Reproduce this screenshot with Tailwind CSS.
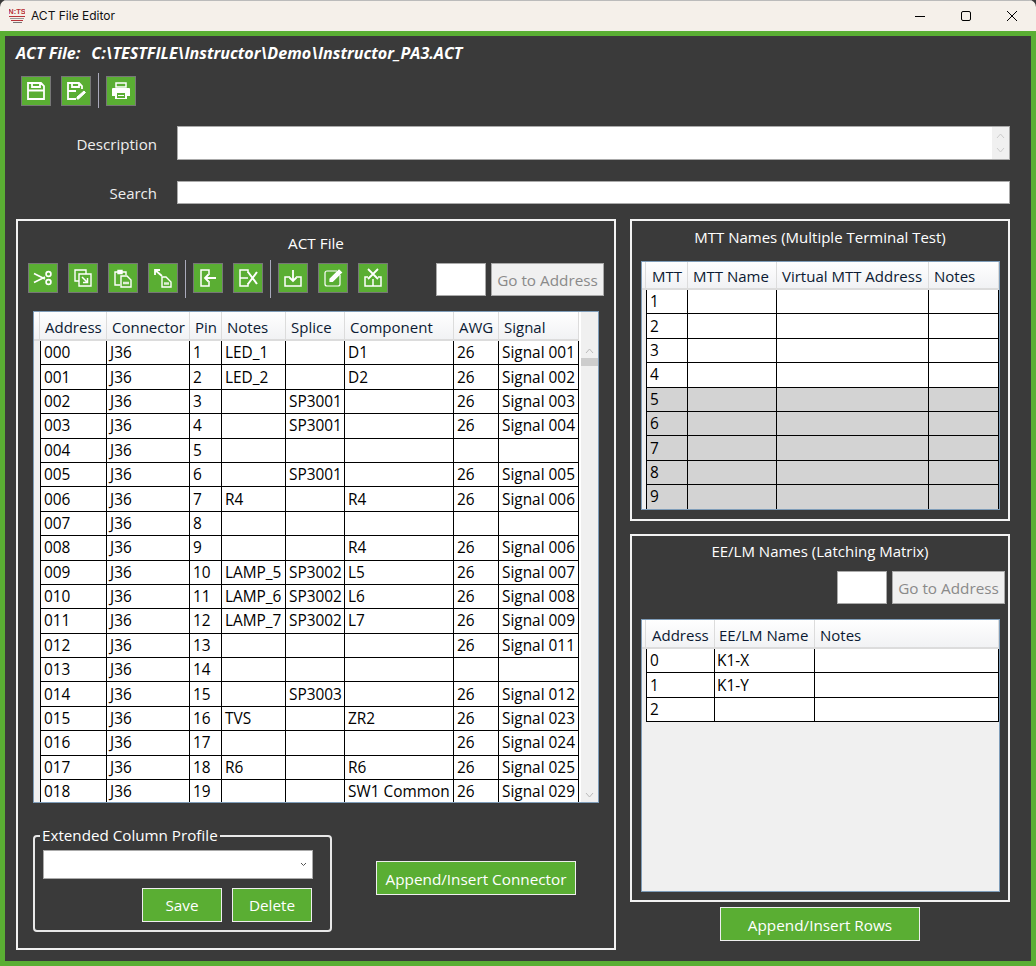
<!DOCTYPE html>
<html><head><meta charset="utf-8"><script src="https://cdn.jsdelivr.net/npm/@tailwindcss/browser@4"></script><title>ACT File Editor</title></head>
<body class="bg-[#3a3a3a] overflow-hidden">
<div class="w-[1036px] h-[966px] flex flex-col font-['Open_Sans',sans-serif] text-[15.3px] overflow-hidden rounded-t-[7px]">
 <div class="h-[31px] shrink-0 bg-[#f5f0ea] flex items-center border-t border-[#bbb] relative">
  <div class="w-[16px] h-[17px] ml-[9px] flex flex-col items-center overflow-hidden">
   <span class="text-[7.5px] leading-[8px] font-bold text-[#b8333a] font-['Liberation_Sans',sans-serif] border-b border-[#b8333a]">N:TS</span>
   <div class="w-[14px] h-[1px] bg-[#999] mt-[1px]"></div><div class="w-[12px] h-[1px] bg-[#b8333a] mt-[1px]"></div><div class="w-[9px] h-[1px] bg-[#777] mt-[1px]"></div>
  </div>
  <span class="ml-[6px] text-[12px] text-[#111] font-['Inter',sans-serif]">ACT File Editor</span>
  <div class="ml-auto flex items-center mr-[1px]">
   <svg class="w-[46px] h-[12px]" viewBox="0 0 46 12"><path d="M18 6.500h10" stroke="#000" fill="none"/></svg>
   <svg class="w-[46px] h-[12px]" viewBox="0 0 46 12"><rect x="18.500" y="1.500" width="9" height="9" rx="1.500" stroke="#000" fill="none"/></svg>
   <svg class="w-[46px] h-[12px]" viewBox="0 0 46 12"><path d="M18 1l10 10M28 1L18 11" stroke="#000" fill="none"/></svg>
  </div>
 </div>
 <div class="flex-1 border-[5px] border-[#5aae33] bg-[#3a3a3a] text-white flex flex-col pl-[11px] min-h-0">
  <div class="h-[34px] flex items-center font-bold italic text-[16.1px] shrink-0"><span>ACT File:</span><span class="ml-[11px]">C:\TESTFILE\Instructor\Demo\Instructor_PA3.ACT</span></div>
  <div class="h-[35px] mt-[3px] flex items-center pl-[5px] shrink-0">
   <div class="w-[30px] h-[30px] bg-[#5aae33] border border-[#777] flex items-center justify-center"><svg width="20" height="20" viewBox="0 0 20 20" fill="none" stroke="#fff" stroke-width="1.800"><path d="M2 2h13l3 3v13H2zM6 2v4h8V2M2 9.500h16"/></svg></div>
   <div class="w-[30px] h-[30px] ml-[10px] bg-[#5aae33] border border-[#777] flex items-center justify-center"><svg width="20" height="20" viewBox="0 0 20 20" fill="none" stroke="#fff" stroke-width="1.800"><path d="M10 18H2V2h11l3 3v3M6 2v4h7V2M2 10h8"/><path d="M11 18v-2l7-6 1.500 1.500-7 6.500z" fill="#fff" stroke-width="1"/></svg></div>
   <div class="w-[1px] h-[35px] bg-[#aab] ml-[7px] mr-[7px]"></div>
   <div class="w-[30px] h-[30px] bg-[#5aae33] border border-[#777] flex items-center justify-center"><svg width="20" height="20" viewBox="0 0 20 20"><path d="M5 2h10v4H5z" fill="none" stroke="#fff" stroke-width="1.500"/><path d="M2 7h16a1 1 0 0 1 1 1v7h-3v3H4v-3H1V8a1 1 0 0 1 1-1z" fill="#fff"/><path d="M6 12h8v5H6z" fill="#5aae33"/><path d="M7 14.500h6" stroke="#fff"/></svg></div>
  </div>
  <div class="h-[34px] mt-[18px] flex shrink-0">
   <div class="w-[141px] text-right text-[15.1px] leading-[36px] text-[#eee]">Description</div>
   <div class="ml-[20px] w-[833px] bg-white border border-[#aaa] flex justify-end">
    <div class="w-[17px] bg-[#f0f0f0] flex flex-col items-center justify-between py-[6px]">
     <svg width="9" height="6" viewBox="0 0 9 6"><path d="M1 5l3.500-4L8 5" stroke="#ccc" fill="none"/></svg>
     <svg width="9" height="6" viewBox="0 0 9 6"><path d="M1 1l3.500 4L8 1" stroke="#ccc" fill="none"/></svg>
    </div>
   </div>
  </div>
  <div class="h-[23px] mt-[21px] flex shrink-0">
   <div class="w-[141px] text-right text-[15px] leading-[25px] text-[#eee]">Search</div>
   <div class="ml-[20px] w-[833px] bg-white border border-[#aaa]"></div>
  </div>
  <div class="mt-[15px] flex items-start shrink-0">
   <!-- left panel -->
   <div class="w-[600px] h-[731px] border-2 border-[#f2f2f2] flex flex-col">
    <div class="h-[42px] pt-[11px] text-center leading-[22px] shrink-0">ACT File</div>
    <div class="h-[33px] flex items-start pl-[10px] shrink-0 relative">
     <div class="w-[30px] h-[30px] bg-[#5aae33] border border-[#777] flex items-center justify-center"><svg width="20" height="20" viewBox="0 0 20 20" fill="none" stroke="#fff" stroke-width="1.700"><path d="M1 5.500L12 11M1 14.500L12 9"/><circle cx="15.500" cy="6" r="2.400"/><circle cx="15.500" cy="14" r="2.400"/></svg></div>
     <div class="w-[30px] h-[30px] ml-[10px] bg-[#5aae33] border border-[#777] flex items-center justify-center"><svg width="20" height="20" viewBox="0 0 20 20" fill="none" stroke="#fff" stroke-width="1.400"><path d="M6 13H2V2h11v4"/><path d="M6 6h12v12H6z"/><path d="M9 9l5 5M14.500 10v4.500H10" stroke-width="1.500"/></svg></div>
     <div class="w-[30px] h-[30px] ml-[10px] bg-[#5aae33] border border-[#777] flex items-center justify-center"><svg width="20" height="20" viewBox="0 0 20 20" fill="none" stroke="#fff" stroke-width="1.400"><path d="M7 17H2V4h3M9 4h4v3"/><path d="M5 2.500h4v3H5z" fill="#fff"/><path d="M8 8h6l4 4v7H8z"/><path d="M10 15h6" stroke-width="2.500" stroke="#dfefd6"/></svg></div>
     <div class="w-[30px] h-[30px] ml-[10px] bg-[#5aae33] border border-[#777] flex items-center justify-center"><svg width="20" height="20" viewBox="0 0 20 20" fill="none" stroke="#fff" stroke-width="1.400"><path d="M2 2l7 6M2 7V2h5" stroke-width="1.800"/><path d="M9 9h4l5 5v5H9z"/><path d="M11 15.500h5" stroke-width="2.500" stroke="#dfefd6"/></svg></div>
     <div class="w-[1px] h-[38px] bg-[#aab] ml-[7px] mr-[7px] mt-[-3px]"></div>
     <div class="w-[30px] h-[30px] bg-[#5aae33] border border-[#777] flex items-center justify-center"><svg width="20" height="20" viewBox="0 0 20 20" fill="none" stroke="#fff" stroke-width="1.500"><path d="M11 7V2H3v16h8v-5"/><path d="M18 10H7M10.500 6.500L7 10l3.500 3.500" stroke-width="1.800"/></svg></div>
     <div class="w-[30px] h-[30px] ml-[10px] bg-[#5aae33] border border-[#777] flex items-center justify-center"><svg width="20" height="20" viewBox="0 0 20 20" fill="none" stroke="#fff" stroke-width="1.500"><path d="M10 5V2H2v16h8v-3M2 10h8"/><path d="M10 4l9 12M19 4l-9 12" stroke-width="2"/></svg></div>
     <div class="w-[1px] h-[38px] bg-[#aab] ml-[7px] mr-[7px] mt-[-3px]"></div>
     <div class="w-[30px] h-[30px] bg-[#5aae33] border border-[#777] flex items-center justify-center"><svg width="20" height="20" viewBox="0 0 20 20" fill="none" stroke="#fff" stroke-width="1.500"><path d="M7 9H2v9h16V9h-5"/><path d="M10 2v11M6.500 9.500L10 13l3.500-3.500" stroke-width="1.800"/></svg></div>
     <div class="w-[30px] h-[30px] ml-[10px] bg-[#5aae33] border border-[#777] flex items-center justify-center"><svg width="20" height="20" viewBox="0 0 20 20" fill="none" stroke="#fff" stroke-width="1.200"><path d="M14 3H4a2 2 0 0 0-2 2v11a2 2 0 0 0 2 2h11a2 2 0 0 0 2-2V7"/><path d="M7 13.500v-2.500l9-9 2.500 2.500-9 9z" fill="#fff"/></svg></div>
     <div class="w-[30px] h-[30px] ml-[10px] bg-[#5aae33] border border-[#777] flex items-center justify-center"><svg width="20" height="20" viewBox="0 0 20 20" fill="none" stroke="#fff" stroke-width="1.500"><path d="M5 9H2v9h16V9h-3M10 11v7"/><path d="M5 1l10 10M15 1L5 11" stroke-width="1.800"/></svg></div>
     <div class="ml-[48px] w-[50px] h-[33px] bg-white border border-[#aaa]"></div>
     <div class="ml-[5px] w-[113px] h-[33px] bg-[#f0f0f0] border border-[#aaa] text-[#8a8a8a] text-center leading-[32px]">Go to Address</div>
    </div>
    <!-- main grid -->
    <div class="mt-[15px] ml-[15px] w-[566px] h-[492px] bg-white border border-[#7f9db9] flex shrink-0 overflow-hidden">
     <table class="table-fixed border-separate border-spacing-0 w-[545px] h-min text-[15.4px] text-black [&_td]:border-r [&_td]:border-b [&_td]:border-black [&_td]:px-[3px] [&_td]:pt-[1px] [&_td]:h-[24.4px] [&_td]:leading-[20px] [&_td]:whitespace-nowrap [&_td]:overflow-hidden [&_td:first-child]:border-0 [&_td:first-child]:px-0 [&_td:first-child]:bg-[#f0f0f0] [&_td:nth-child(2)]:border-l [&_th]:h-[29px] [&_th]:pt-[3px] [&_th]:font-normal [&_th]:text-[15px] [&_th]:text-left [&_th]:pl-[5px] [&_th]:pr-0 [&_th]:text-[#0b1a33] [&_th]:whitespace-nowrap [&_th]:bg-gradient-to-b [&_th]:from-white [&_th]:to-[#f1f2f4] [&_th]:border-r [&_th]:border-b-2 [&_th]:border-[#dcdcdc]">
      <colgroup><col class="w-[6px]"><col class="w-[67px]"><col class="w-[83px]"><col class="w-[32px]"><col class="w-[64px]"><col class="w-[59px]"><col class="w-[109px]"><col class="w-[45px]"><col class="w-[80px]"></colgroup>
      <thead><tr><th></th><th>Address</th><th>Connector</th><th>Pin</th><th>Notes</th><th>Splice</th><th>Component</th><th>AWG</th><th>Signal</th></tr></thead>
      <tbody>
       <tr><td></td><td>000</td><td>J36</td><td>1</td><td>LED_1</td><td></td><td>D1</td><td>26</td><td>Signal 001</td></tr>
       <tr><td></td><td>001</td><td>J36</td><td>2</td><td>LED_2</td><td></td><td>D2</td><td>26</td><td>Signal 002</td></tr>
       <tr><td></td><td>002</td><td>J36</td><td>3</td><td></td><td>SP3001</td><td></td><td>26</td><td>Signal 003</td></tr>
       <tr><td></td><td>003</td><td>J36</td><td>4</td><td></td><td>SP3001</td><td></td><td>26</td><td>Signal 004</td></tr>
       <tr><td></td><td>004</td><td>J36</td><td>5</td><td></td><td></td><td></td><td></td><td></td></tr>
       <tr><td></td><td>005</td><td>J36</td><td>6</td><td></td><td>SP3001</td><td></td><td>26</td><td>Signal 005</td></tr>
       <tr><td></td><td>006</td><td>J36</td><td>7</td><td>R4</td><td></td><td>R4</td><td>26</td><td>Signal 006</td></tr>
       <tr><td></td><td>007</td><td>J36</td><td>8</td><td></td><td></td><td></td><td></td><td></td></tr>
       <tr><td></td><td>008</td><td>J36</td><td>9</td><td></td><td></td><td>R4</td><td>26</td><td>Signal 006</td></tr>
       <tr><td></td><td>009</td><td>J36</td><td>10</td><td>LAMP_5</td><td>SP3002</td><td>L5</td><td>26</td><td>Signal 007</td></tr>
       <tr><td></td><td>010</td><td>J36</td><td>11</td><td>LAMP_6</td><td>SP3002</td><td>L6</td><td>26</td><td>Signal 008</td></tr>
       <tr><td></td><td>011</td><td>J36</td><td>12</td><td>LAMP_7</td><td>SP3002</td><td>L7</td><td>26</td><td>Signal 009</td></tr>
       <tr><td></td><td>012</td><td>J36</td><td>13</td><td></td><td></td><td></td><td>26</td><td>Signal 011</td></tr>
       <tr><td></td><td>013</td><td>J36</td><td>14</td><td></td><td></td><td></td><td></td><td></td></tr>
       <tr><td></td><td>014</td><td>J36</td><td>15</td><td></td><td>SP3003</td><td></td><td>26</td><td>Signal 012</td></tr>
       <tr><td></td><td>015</td><td>J36</td><td>16</td><td>TVS</td><td></td><td>ZR2</td><td>26</td><td>Signal 023</td></tr>
       <tr><td></td><td>016</td><td>J36</td><td>17</td><td></td><td></td><td></td><td>26</td><td>Signal 024</td></tr>
       <tr><td></td><td>017</td><td>J36</td><td>18</td><td>R6</td><td></td><td>R6</td><td>26</td><td>Signal 025</td></tr>
       <tr><td></td><td>018</td><td>J36</td><td>19</td><td></td><td></td><td>SW1 Common</td><td>26</td><td>Signal 029</td></tr>
      </tbody>
     </table>
     <div class="ml-auto w-[17px] bg-[#f0f0f0] flex flex-col items-center pt-[36px] pb-[4px]">
      <svg width="9" height="6" viewBox="0 0 9 6"><path d="M1 5l3.500-4L8 5" stroke="#bbb" fill="none"/></svg>
      <div class="w-full h-[8px] bg-[#cdcdcd] mt-[4px]"></div>
      <svg class="mt-auto" width="9" height="6" viewBox="0 0 9 6"><path d="M1 1l3.500 4L8 1" stroke="#bbb" fill="none"/></svg>
     </div>
    </div>
    <!-- bottom -->
    <div class="flex items-start shrink-0 mt-[32px] ml-[15px]">
     <div class="relative w-[299px] h-[97px] border-2 border-[#e8e8e8] rounded-[4px] pl-[8px] pt-[13px]">
      <span class="absolute left-[5px] top-[-12px] bg-[#3a3a3a] px-[2px] text-[15.2px] leading-[20px] whitespace-nowrap">Extended Column Profile</span>
      <div class="w-[270px] h-[29px] bg-white border border-[#aaa] flex items-center justify-end pr-[5px]"><svg width="7" height="5" viewBox="0 0 7 5"><path d="M1 1l2.500 2.500L6 1" stroke="#555" fill="none"/></svg></div>
      <div class="flex mt-[9px] pl-[99px] gap-[10px]">
       <div class="w-[80px] h-[34px] bg-[#5aae33] border border-[#eee] text-center leading-[32px]">Save</div>
       <div class="w-[80px] h-[34px] bg-[#5aae33] border border-[#eee] text-center leading-[32px]">Delete</div>
      </div>
     </div>
     <div class="ml-[44px] mt-[26px] w-[200px] h-[34px] bg-[#5aae33] border border-[#eee] text-center leading-[34px]">Append/Insert Connector</div>
    </div>
   </div>
   <!-- right col -->
   <div class="ml-[14px] w-[380px] flex flex-col">
    <div class="h-[302px] border-2 border-[#f2f2f2] flex flex-col">
     <div class="h-[40px] pt-[5px] text-center text-[15px] leading-[22px] shrink-0">MTT Names (Multiple Terminal Test)</div>
     <div class="ml-[9px] w-[359px] h-[249px] bg-white border border-[#7f9db9] overflow-hidden shrink-0">
      <table class="table-fixed border-separate border-spacing-0 w-[357px] text-[15.4px] text-black [&_td]:border-r [&_td]:border-b [&_td]:border-black [&_td]:px-[3px] [&_td]:pt-[1px] [&_td]:h-[24.4px] [&_td]:leading-[20px] [&_td:first-child]:border-0 [&_td:first-child]:px-0 [&_td:first-child]:bg-[#f0f0f0] [&_td:nth-child(2)]:border-l [&_th]:h-[28px] [&_th]:pt-[3px] [&_th]:font-normal [&_th]:text-[15px] [&_th]:text-left [&_th]:pl-[5px] [&_th:nth-child(2)]:pl-[6px] [&_th]:pr-0 [&_th]:text-[#0b1a33] [&_th]:whitespace-nowrap [&_th]:bg-gradient-to-b [&_th]:from-white [&_th]:to-[#f1f2f4] [&_th]:border-r [&_th]:border-b-2 [&_th]:border-[#dcdcdc]">
       <colgroup><col class="w-[4px]"><col class="w-[42px]"><col class="w-[89px]"><col class="w-[152px]"><col class="w-[70px]"></colgroup>
       <thead><tr><th></th><th>MTT</th><th>MTT Name</th><th>Virtual MTT Address</th><th>Notes</th></tr></thead>
       <tbody>
        <tr><td></td><td>1</td><td></td><td></td><td></td></tr>
        <tr><td></td><td>2</td><td></td><td></td><td></td></tr>
        <tr><td></td><td>3</td><td></td><td></td><td></td></tr>
        <tr><td></td><td>4</td><td></td><td></td><td></td></tr>
        <tr class="[&_td]:bg-[#d3d3d3]"><td></td><td>5</td><td></td><td></td><td></td></tr>
        <tr class="[&_td]:bg-[#d3d3d3]"><td></td><td>6</td><td></td><td></td><td></td></tr>
        <tr class="[&_td]:bg-[#d3d3d3]"><td></td><td>7</td><td></td><td></td><td></td></tr>
        <tr class="[&_td]:bg-[#d3d3d3]"><td></td><td>8</td><td></td><td></td><td></td></tr>
        <tr class="[&_td]:bg-[#d3d3d3]"><td></td><td>9</td><td></td><td></td><td></td></tr>
       </tbody>
      </table>
     </div>
    </div>
    <div class="h-[368px] mt-[13px] border-2 border-[#f2f2f2] flex flex-col">
     <div class="h-[35px] pt-[4px] text-center text-[15px] leading-[22px] shrink-0">EE/LM Names (Latching Matrix)</div>
     <div class="h-[33px] flex justify-end pr-[3px] shrink-0">
      <div class="w-[50px] h-[33px] bg-white border border-[#aaa]"></div>
      <div class="ml-[5px] w-[113px] h-[33px] bg-[#f0f0f0] border border-[#aaa] text-[#8a8a8a] text-center leading-[32px]">Go to Address</div>
     </div>
     <div class="mt-[15px] ml-[9px] w-[359px] h-[273px] bg-[#f0f0f0] border border-[#7f9db9] overflow-hidden shrink-0">
      <table class="table-fixed border-separate border-spacing-0 w-[357px] text-[15.4px] text-black [&_td]:bg-white [&_td]:border-r [&_td]:border-b [&_td]:border-black [&_td]:px-[3px] [&_td]:pt-[1px] [&_td:nth-child(3)]:pl-[2px] [&_td]:h-[24.4px] [&_td]:leading-[20px] [&_td:first-child]:border-0 [&_td:first-child]:px-0 [&_td:first-child]:bg-[#f0f0f0] [&_td:nth-child(2)]:border-l [&_th]:h-[29px] [&_th]:pt-[3px] [&_th]:font-normal [&_th]:text-[15px] [&_th]:text-left [&_th]:pl-[5px] [&_th:nth-child(2)]:pl-[6px] [&_th:nth-child(3)]:pl-[4px] [&_th]:pr-0 [&_th]:text-[#0b1a33] [&_th]:whitespace-nowrap [&_th]:bg-gradient-to-b [&_th]:from-white [&_th]:to-[#f1f2f4] [&_th]:border-r [&_th]:border-b-2 [&_th]:border-[#dcdcdc]">
       <colgroup><col class="w-[4px]"><col class="w-[69px]"><col class="w-[100px]"><col class="w-[184px]"></colgroup>
       <thead><tr><th></th><th>Address</th><th>EE/LM Name</th><th>Notes</th></tr></thead>
       <tbody>
        <tr><td></td><td>0</td><td>K1-X</td><td></td></tr>
        <tr><td></td><td>1</td><td>K1-Y</td><td></td></tr>
        <tr><td></td><td>2</td><td></td><td></td></tr>
       </tbody>
      </table>
     </div>
    </div>
    <div class="mt-[5px] ml-[90px] w-[200px] h-[34px] bg-[#5aae33] border border-[#eee] text-center leading-[34px]">Append/Insert Rows</div>
   </div>
  </div>
 </div>
</div>
</body></html>
